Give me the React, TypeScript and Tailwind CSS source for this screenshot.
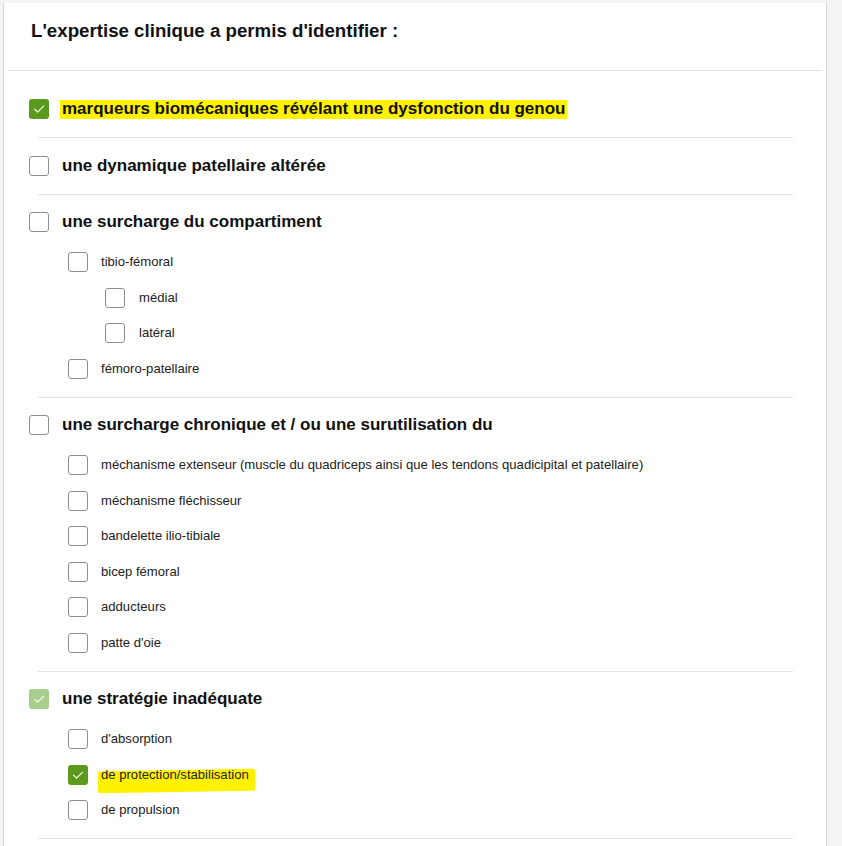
import React from "react";

type Sub = { label: string; checked?: boolean; mark?: boolean; children?: Sub[] };
type Group = { label: string; checked?: "on" | "faded"; highlight?: boolean; subs?: Sub[] };

const groups: Group[] = [
  { label: "marqueurs biomécaniques révélant une dysfonction du genou", checked: "on", highlight: true },
  { label: "une dynamique patellaire altérée" },
  {
    label: "une surcharge du compartiment",
    subs: [
      { label: "tibio-fémoral", children: [{ label: "médial" }, { label: "latéral" }] },
      { label: "fémoro-patellaire" },
    ],
  },
  {
    label: "une surcharge chronique et / ou une surutilisation du",
    subs: [
      { label: "méchanisme extenseur (muscle du quadriceps ainsi que les tendons quadicipital et patellaire)" },
      { label: "méchanisme fléchisseur" },
      { label: "bandelette ilio-tibiale" },
      { label: "bicep fémoral" },
      { label: "adducteurs" },
      { label: "patte d'oie" },
    ],
  },
  {
    label: "une stratégie inadéquate",
    checked: "faded",
    subs: [
      { label: "d'absorption" },
      { label: "de protection/stabilisation", checked: true, mark: true },
      { label: "de propulsion" },
    ],
  },
];

function Box({ state }: { state?: "on" | "faded" }) {
  if (!state) {
    return <span className="w-5 h-5 shrink-0 rounded-[3px] border border-[#8e8e8e] bg-white" />;
  }
  return (
    <span
      className={`w-5 h-5 shrink-0 rounded-[3px] flex items-center justify-center ${
        state === "on" ? "bg-[#5b9a1c]" : "bg-[#a9cd8c]"
      }`}
    >
      <svg width="20" height="20" viewBox="0 0 20 20" fill="none">
        <path d="M5.5 10.2 L8.6 13.2 L14.6 7.2" stroke="white" strokeWidth="1.1" strokeLinecap="round" strokeLinejoin="round" />
      </svg>
    </span>
  );
}

function SubRow({ item }: { item: Sub }) {
  return (
    <>
      <div className="h-5 flex items-center gap-[13px]">
        <Box state={item.checked ? "on" : undefined} />
        {item.mark ? (
          <span className="relative text-[13.1px] text-[#222]">
            <span className="absolute left-[-3px] right-[-6px] top-[5px] bottom-[-7px] bg-[#fff200] rounded-[2px] -skew-y-1" />
            <span className="relative">{item.label}</span>
          </span>
        ) : (
          <span className="text-[13.1px] text-[#222]">{item.label}</span>
        )}
      </div>
      {item.children && (
        <div className="flex flex-col gap-[15.5px] ml-[37px]">
          {item.children.map((c) => (
            <div key={c.label} className="h-5 flex items-center gap-[14px]">
              <Box />
              <span className="text-[13.1px] text-[#222]">{c.label}</span>
            </div>
          ))}
        </div>
      )}
    </>
  );
}

export default function App() {
  return (
    <div className="min-h-[846px] bg-[#f4f4f4] pt-[3px] pl-[3px]" style={{ fontFamily: '"Liberation Sans", Arial, sans-serif' }}>
      <div className="w-[824px] min-h-[843px] bg-white border-x border-[#d4d4d4]">
        <div className="mx-[4px] h-[68px] border-b border-[#e2e2e2] pl-[23px] pt-[17px]">
          <h1 className="text-[18.7px] leading-[22px] font-bold text-[#111]">L'expertise clinique a permis d'identifier :</h1>
        </div>

        {groups.map((g, i) => (
          <div
            key={g.label}
            className={`ml-[34px] mr-[33px] border-b border-[#e2e2e2] ${i === 0 ? "pt-[28px] pb-[18px]" : "pt-[17.5px] pb-[18px]"}`}
          >
            <div className="-ml-[9px] flex flex-col">
              <div className="h-5 flex items-center gap-[13px]">
                <Box state={g.checked} />
                {g.highlight ? (
                  <span className="text-[17px] font-bold text-[#111] bg-[#fff200] px-[2px] -ml-[2px] leading-[18px] pb-[1px]">
                    {g.label}
                  </span>
                ) : (
                  <span className="text-[17px] font-bold text-[#111]">{g.label}</span>
                )}
              </div>
              {g.subs && (
                <div className="ml-[39px] mt-[20px] flex flex-col gap-[15.5px]">
                  {g.subs.map((s) => (
                    <SubRow key={s.label} item={s} />
                  ))}
                </div>
              )}
            </div>
          </div>
        ))}
      </div>
    </div>
  );
}
